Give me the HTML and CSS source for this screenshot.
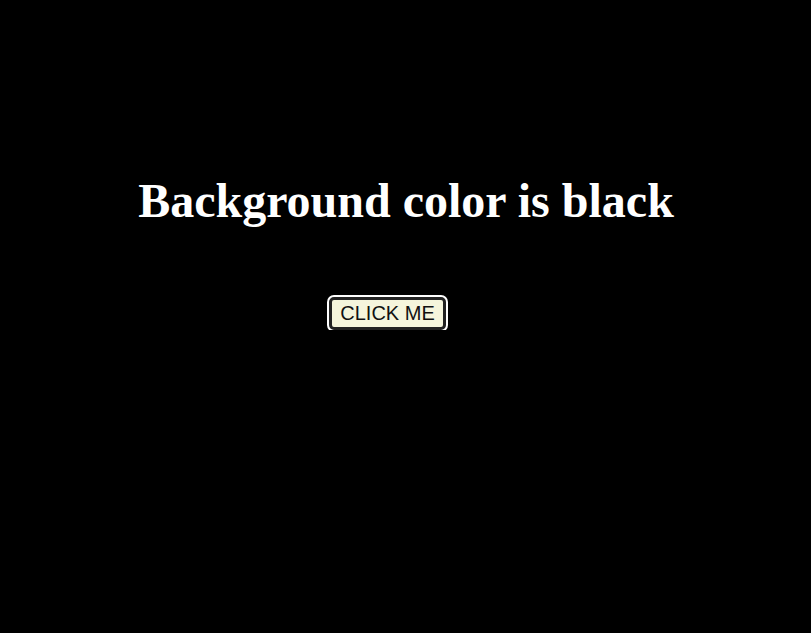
FILE: index.html
```html
<!DOCTYPE html>
<html>
<head>
<meta charset="utf-8">
<link rel="stylesheet" href="styles.css">
</head>
<body>
<main class="page">
  <h1 class="title">Background color is black</h1>
  <div class="actions">
    <button class="btn">CLICK ME</button>
  </div>
</main>
</body>
</html>
```
FILE: styles.css
```css
html, body {
  margin: 0;
  padding: 0;
  background: #000;
}
.page {
  padding-top: 173px;
  display: flex;
  flex-direction: column;
  align-items: center;
}
.title {
  margin: 0 0 0 1px;
  font-family: "Liberation Serif", serif;
  font-weight: bold;
  font-size: 48px;
  line-height: 56px;
  color: #fff;
}
.actions {
  margin-top: 68px;
  padding-right: 36px;
  display: flex;
}
.btn {
  box-sizing: border-box;
  height: 33px;
  font-family: "Liberation Sans", Arial, sans-serif;
  font-size: 20px;
  line-height: 23px;
  color: #111;
  background: #f5f5dc;
  border: 3px solid #222;
  border-radius: 5px;
  box-shadow: 0 0 0 2px #fff;
  padding: 0 8px;
  margin: 0;
}
```
